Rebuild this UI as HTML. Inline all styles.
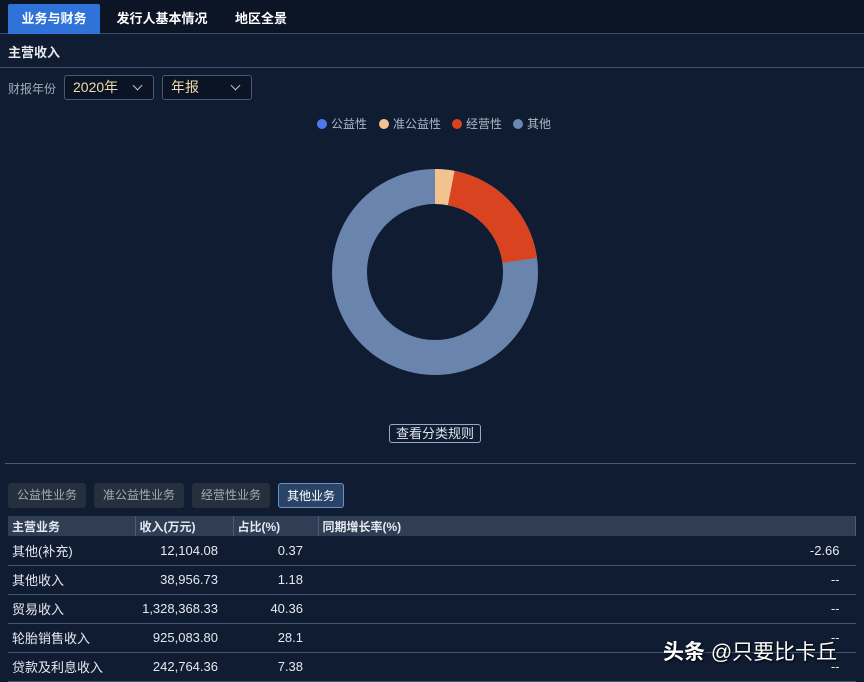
<!DOCTYPE html>
<html><head><meta charset="utf-8"><style>
*{margin:0;padding:0;box-sizing:border-box}
body{width:864px;height:681px;background:#0f1c32;font-family:"Liberation Sans","Noto Sans CJK SC",sans-serif;color:#e6e9ef;position:relative;overflow:hidden;font-size:13px}
.abs{position:absolute}
.topbar{left:0;top:0;width:864px;height:34px;background:#0c1526;border-bottom:1px solid #3a4a63}
.tab{position:absolute;top:4px;height:30px;line-height:30px;font-size:13px;font-weight:bold;text-align:center;color:#fff}
.line{position:absolute;height:1px;background:#3d4e68}
.sel{position:absolute;top:75px;height:25px;border:1px solid #4a5870;border-radius:3px;background:#0b1424;color:#f0d9b0;font-size:14px;line-height:23px;padding-left:8px}
.chev{position:absolute;right:12px;top:6px;width:7px;height:7px;border-right:1.3px solid #b9c2d0;border-bottom:1.3px solid #b9c2d0;transform:rotate(45deg)}
.leg{position:absolute;top:117px;font-size:12px;color:#aeb7c6;line-height:14px}
.dot{display:inline-block;width:10px;height:10px;border-radius:50%;vertical-align:-1px;margin-right:4px}
.btn{position:absolute;top:483px;height:25px;line-height:25px;font-size:12px;color:#a3abb8;background:#25303f;border-radius:3px;text-align:center}
table{position:absolute;left:8px;top:516px;width:848px;border-collapse:collapse}
th{height:20px;background:#2f3e55;font-size:12px;text-align:left;padding-left:4px;font-weight:bold;border-right:1px solid #4c5c75}
td{height:29px;font-size:13px;border-bottom:1px solid #45556e;padding:0 4px}
td.r{text-align:right;padding-right:15px}
</style></head><body>
<div class="abs topbar"></div>
<div class="tab" style="left:8px;width:92px;background:#2f73d8;border-radius:2px 2px 0 0">业务与财务</div>
<div class="tab" style="left:104px;width:116px">发行人基本情况</div>
<div class="tab" style="left:224px;width:74px">地区全景</div>
<div class="abs" style="left:8px;top:42px;font-size:13px;font-weight:bold">主营收入</div>
<div class="line" style="left:0;top:67px;width:864px"></div>
<div class="abs" style="left:8px;top:80px;font-size:12px;color:#a3abb8">财报年份</div>
<div class="sel" style="left:64px;width:90px">2020年<span class="chev"></span></div>
<div class="sel" style="left:162px;width:90px">年报<span class="chev"></span></div>
<div class="leg" style="left:317px"><span class="dot" style="background:#4c79f0"></span>公益性</div>
<div class="leg" style="left:379px"><span class="dot" style="background:#f2c38e"></span>准公益性</div>
<div class="leg" style="left:452px"><span class="dot" style="background:#d9431f"></span>经营性</div>
<div class="leg" style="left:513px"><span class="dot" style="background:#6c87b0"></span>其他</div>
<svg class="abs" style="left:0;top:0" width="864" height="681">
<g transform="rotate(-90 435 272)" fill="none" stroke-width="35">
<circle cx="435" cy="272" r="85.5" stroke="#6984ad"/>
<circle cx="435" cy="272" r="85.5" stroke="#f2c38e" stroke-dasharray="16.4 600"/>
<circle cx="435" cy="272" r="85.5" stroke="#d9431f" stroke-dasharray="0 16.4 106 600"/>
</g>
</svg>
<div class="abs" style="left:389px;top:424px;width:92px;height:19px;border:1px solid #9aa8c4;border-radius:3px;font-size:13px;line-height:17px;text-align:center;color:#e0e5ee">查看分类规则</div>
<div class="line" style="left:5px;top:463px;width:851px;background:#4a5a72"></div>
<div class="btn" style="left:8px;width:78px">公益性业务</div>
<div class="btn" style="left:94px;width:90px">准公益性业务</div>
<div class="btn" style="left:192px;width:78px">经营性业务</div>
<div class="btn" style="left:278px;width:66px;background:#2a4468;border:1px solid #6c8fc8;color:#fff">其他业务</div>
<table>
<tr><th style="width:127px">主营业务</th><th style="width:98px">收入(万元)</th><th style="width:85px">占比(%)</th><th>同期增长率(%)</th></tr>
<tr><td>其他(补充)</td><td class="r">12,104.08</td><td class="r">0.37</td><td class="r" style="padding-right:16px">-2.66</td></tr>
<tr><td>其他收入</td><td class="r">38,956.73</td><td class="r">1.18</td><td class="r" style="padding-right:16px">--</td></tr>
<tr><td>贸易收入</td><td class="r">1,328,368.33</td><td class="r">40.36</td><td class="r" style="padding-right:16px">--</td></tr>
<tr><td>轮胎销售收入</td><td class="r">925,083.80</td><td class="r">28.1</td><td class="r" style="padding-right:16px">--</td></tr>
<tr><td>贷款及利息收入</td><td class="r">242,764.36</td><td class="r">7.38</td><td class="r" style="padding-right:16px">--</td></tr>
</table>
<div class="abs" style="left:663px;top:636px;font-size:21px;color:#fff;text-shadow:1px 1px 2px #000"><b>头条</b> @只要比卡丘</div>
</body></html>
